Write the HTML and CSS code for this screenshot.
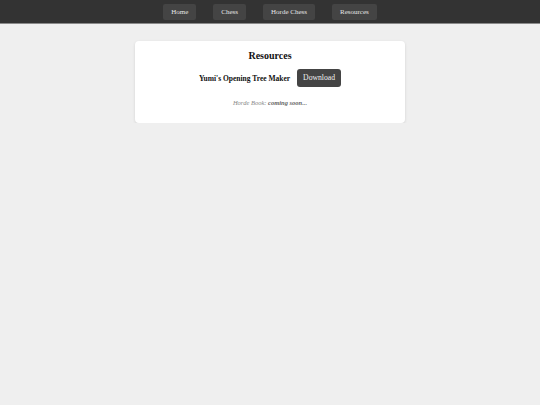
FILE: index.html
```html
<!DOCTYPE html>
<html>
<head>
<meta charset="utf-8">
<link rel="stylesheet" href="styles.css">
</head>
<body>
<nav class="nav">
  <a class="nav-btn">Home</a>
  <a class="nav-btn">Chess</a>
  <a class="nav-btn">Horde Chess</a>
  <a class="nav-btn">Resources</a>
</nav>
<main class="main">
  <section class="card">
    <h1 class="title">Resources</h1>
    <div class="row">
      <span class="item-name">Yumi's Opening Tree Maker</span>
      <a class="download">Download</a>
    </div>
    <p class="note">Horde Book: <b>coming soon...</b></p>
  </section>
</main>
</body>
</html>
```

FILE: styles.css
```css
html, body {
  margin: 0;
  padding: 0;
  background: #efefef;
  font-family: "Liberation Serif", "Times New Roman", serif;
}
.nav {
  background: #333333;
  height: 23px;
  border-bottom: 1px solid #8a8a8a;
  display: flex;
  justify-content: center;
  align-items: center;
  gap: 17px;
}
.nav-btn {
  background: #444444;
  color: #e6e6e6;
  font-size: 7px;
  padding: 0 8px;
  height: 16px;
  line-height: 16px;
  border-radius: 2px;
}
.main {
  display: flex;
  justify-content: center;
  padding-top: 17px;
}
.card {
  width: 270px;
  background: #ffffff;
  border-radius: 4px;
  box-shadow: 0 1px 3px rgba(0,0,0,0.12);
  padding: 9px 0 14px;
  text-align: center;
  box-sizing: border-box;
  height: 82px;
}
.title {
  margin: 0;
  font-size: 10px;
  line-height: 12px;
  color: #111;
}
.row {
  display: flex;
  justify-content: center;
  align-items: center;
  gap: 7px;
  margin-top: 7px;
}
.item-name {
  font-weight: bold;
  font-size: 7.5px;
  color: #111;
}
.download {
  background: #444444;
  color: #f0f0f0;
  font-size: 7.7px;
  height: 18px;
  line-height: 18px;
  padding: 0 6px;
  border-radius: 3px;
}
.note {
  margin: 12px 0 0;
  font-size: 6.5px;
  font-style: italic;
  color: #888;
}
.note b {
  color: #666;
}
```
